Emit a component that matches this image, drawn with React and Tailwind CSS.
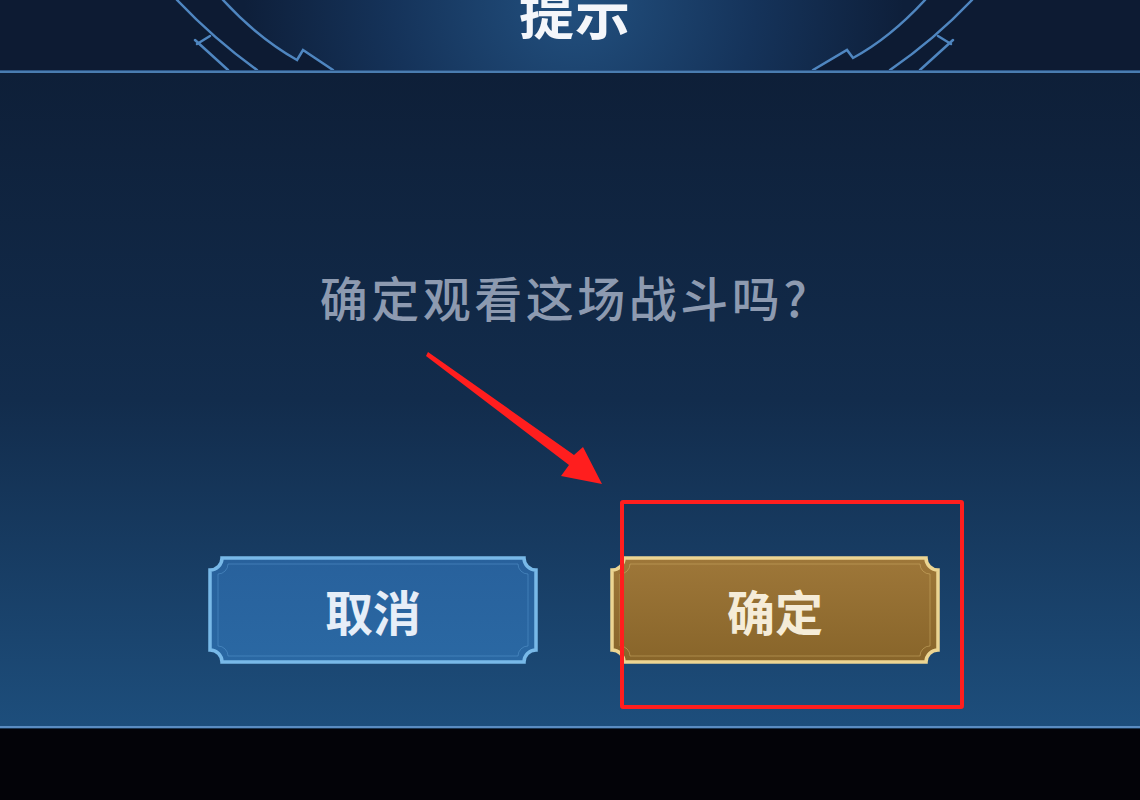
import React from "react";

const FONT = { fontFamily: '"Noto Sans CJK SC", "Noto Sans", sans-serif' };

function HeaderArcs() {
  return (
    <svg className="absolute inset-0" width="1140" height="70" viewBox="0 0 1140 70">
      <defs>
        <radialGradient id="glow" cx="574" cy="0" r="330" gradientUnits="userSpaceOnUse">
          <stop offset="0" stopColor="#22507f" />
          <stop offset="0.55" stopColor="#15335a" />
          <stop offset="1" stopColor="#0e1f3a" />
        </radialGradient>
      </defs>
      <path d="M223,0 Q260,40 297,60 L303,50 L333,70 L813,70 L847,50 L853,58 Q890,38 925,0 Z" fill="url(#glow)" />
      <g fill="none" stroke="#4f86c0" strokeWidth="2.5" strokeLinecap="round">
        <path d="M177,0 Q215,40 257,70" />
        <path d="M195,40 L228,70" />
        <path d="M197,44 L210,36" />
        <path d="M223,0 Q258,38 297,60 L303,50 L333,70" />
        <path d="M972,0 Q934,40 890,70" />
        <path d="M953,40 L920,70" />
        <path d="M951,44 L938,36" />
        <path d="M925,0 Q890,38 853,58 L847,50 L813,70" />
      </g>
    </svg>
  );
}

function ButtonShape({ fillTop, fillBottom, border, inner, id }) {
  return (
    <svg className="absolute inset-0" width="330" height="108" viewBox="0 0 330 108">
      <defs>
        <linearGradient id={id} x1="0" y1="0" x2="0" y2="1">
          <stop offset="0" stopColor={fillTop} />
          <stop offset="1" stopColor={fillBottom} />
        </linearGradient>
      </defs>
      <path
        d="M14,2 H316 A12,12 0 0 0 328,14 V94 A12,12 0 0 0 316,106 H14 A12,12 0 0 0 2,94 V14 A12,12 0 0 0 14,2 Z"
        fill={`url(#${id})`}
        stroke={border}
        strokeWidth="3.5"
      />
      <path
        d="M20,8 H310 A10,10 0 0 0 320,18 V90 A10,10 0 0 0 310,100 H20 A10,10 0 0 0 10,90 V18 A10,10 0 0 0 20,8 Z"
        fill="none"
        stroke={inner}
        strokeWidth="1"
        opacity="0.5"
      />
    </svg>
  );
}

function GameButton({ label, variant }) {
  const gold = variant === "gold";
  return (
    <div className="relative w-[330px] h-[108px] flex items-center justify-center">
      {gold ? (
        <ButtonShape id="g-gold" fillTop="#9e7739" fillBottom="#88652a" border="#ecd592" inner="#d2b26a" />
      ) : (
        <ButtonShape id="g-blue" fillTop="#28619c" fillBottom="#2a68a3" border="#78b9e8" inner="#5a9ad0" />
      )}
      <span
        className={`relative text-[48px] leading-none font-bold ${gold ? "text-[#f5ecd8]" : "text-[#e6eef8]"}`}
        style={FONT}
      >
        {label}
      </span>
    </div>
  );
}

export default function App() {
  return (
    <div className="relative w-[1140px] h-[800px] overflow-hidden bg-[#030308]" style={FONT}>
      {/* Header */}
      <div className="relative h-[70px] bg-[#0d1b33] overflow-hidden flex justify-center">
        <HeaderArcs />
        <h1 className="relative -mt-[17px] ml-[10px] text-[55px] leading-none font-bold text-[#f4f6fa] tracking-[1px]">
          提示
        </h1>
      </div>
      <div className="h-[1px] bg-[#2a5282]" />
      <div className="h-[2px] bg-[#4a7cb0]" />

      {/* Body */}
      <div className="h-[653px] bg-gradient-to-b from-[#0e1f38] via-[#122c4c] to-[#1d4e7c] flex flex-col items-center">
        <p className="mt-[199px] ml-[-10px] text-[48px] leading-none font-medium text-[#8d9ab0] tracking-[3.5px]">
          确定观看这场战斗吗?
        </p>
        <div className="mt-[236px] ml-[8px] flex gap-[72px]">
          <GameButton label="取消" variant="blue" />
          <GameButton label="确定" variant="gold" />
        </div>
      </div>
      <div className="h-[2px] bg-[#5a8cc2]" />
      <div className="h-[1px] bg-[#1a3450]" />

      {/* Annotation overlay */}
      <div className="absolute left-[620px] top-[500px] w-[344px] h-[209px] border-[4px] border-[#ff1e1e] rounded-[3px]" />
      <svg className="absolute left-0 top-0" width="1140" height="800" viewBox="0 0 1140 800">
        <path
          d="M428,352 L574,455 L583,447 L602,484 L561,476 L569,465 L426,356 Z"
          fill="#ff1e1e"
        />
      </svg>
    </div>
  );
}
